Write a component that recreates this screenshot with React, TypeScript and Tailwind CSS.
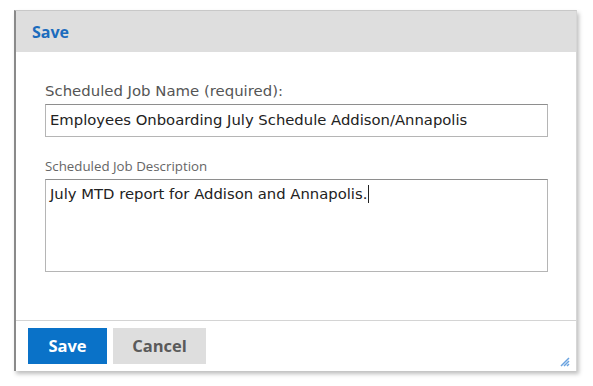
import React from 'react';

export default function App() {
  return (
    <div className="w-[593px] h-[386px] bg-white pt-[10px] pl-[14px]">
      <div className="w-[563px] h-[361px] flex flex-col bg-white border-l-2 border-l-[#8a8a8a] border-t border-t-[#c8c8c8] border-r border-r-[#d6d6d6] shadow-[2px_3px_4px_rgba(0,0,0,0.25)]">
        {/* Header */}
        <div className="h-[41px] bg-[#dedede] flex items-center pl-[16px] shrink-0">
          <span className="text-[#1c6cbd] font-bold text-[16px]" style={{ fontFamily: '"Open Sans", sans-serif' }}>
            Save
          </span>
        </div>

        {/* Body */}
        <div className="flex-1 pl-[29px] pr-[28px] pt-[30px]">
          <label className="block text-[14.9px] leading-[18px] text-[#555] mb-[4px]" style={{ fontFamily: '"DejaVu Sans", Verdana, sans-serif' }}>
            Scheduled Job Name (required):
          </label>
          <div className="h-[33px] border border-[#b5b5b5] border-t-[#8e8e8e] flex items-center px-[4px] text-[14.8px] text-[#222]" style={{ fontFamily: '"DejaVu Sans", Verdana, sans-serif' }}>
            Employees Onboarding July Schedule Addison/Annapolis
          </div>

          <label className="block mt-[21px] mb-[4px] text-[13.3px] leading-[17px] text-[#666]" style={{ fontFamily: '"Open Sans", sans-serif' }}>
            Scheduled Job Description
          </label>
          <div className="h-[93px] border border-[#b5b5b5] border-t-[#8e8e8e] px-[4px] pt-[3px] text-[14.8px] text-[#222]" style={{ fontFamily: '"DejaVu Sans", Verdana, sans-serif' }}>
            July MTD report for Addison and Annapolis.
            <span className="inline-block w-[1px] h-[18px] bg-[#222] align-middle ml-[1px] -mt-[2px]" />
          </div>
        </div>

        {/* Footer */}
        <div className="h-[51px] border-t border-t-[#d4d4d4] flex items-start pt-[7px] pl-[12px] gap-[6px] relative shrink-0">
          <button className="w-[79px] h-[36px] bg-[#0a72c8] text-white font-bold text-[16.5px]" style={{ fontFamily: '"Open Sans", sans-serif' }}>
            Save
          </button>
          <button className="w-[93px] h-[36px] bg-[#dedede] text-[#5a5a5a] font-bold text-[16.5px]" style={{ fontFamily: '"Open Sans", sans-serif' }}>
            Cancel
          </button>
          <svg className="absolute right-[6px] bottom-[4px]" width="10" height="10" viewBox="0 0 10 10">
            <path d="M9 1 L1 9 M9 4 L4 9 M9 7 L7 9" stroke="#6aa3e0" strokeWidth="1.5" />
          </svg>
        </div>
      </div>
    </div>
  );
}
